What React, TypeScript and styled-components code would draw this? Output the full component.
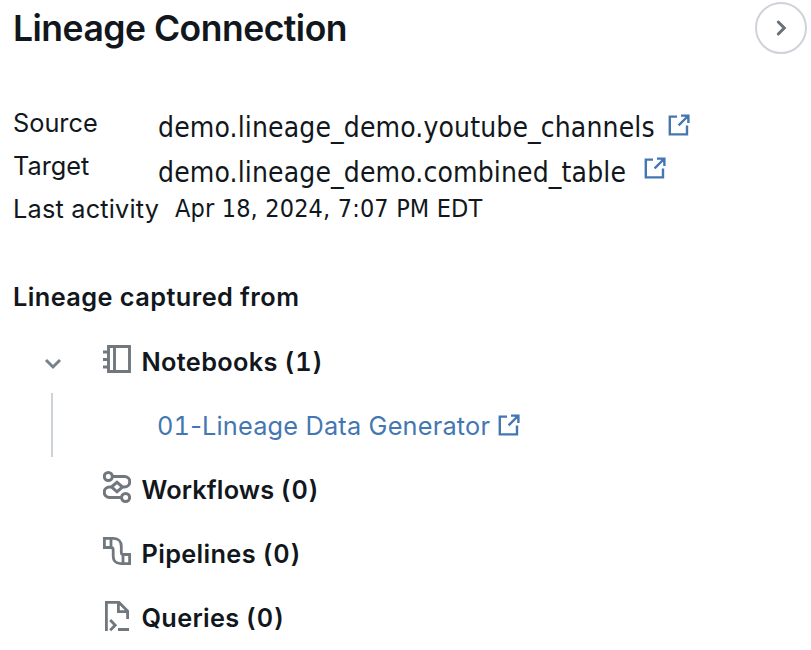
import React from "react";
import styled, { createGlobalStyle } from "styled-components";

const GlobalStyle = createGlobalStyle`
  *, *::before, *::after { box-sizing: border-box; }
  html, body { margin: 0; background: #fff; }
  body { overflow: hidden; font-family: Inter, "Liberation Sans", sans-serif; color: #11171c; }
`;

const Panel = styled.main`
  width: 811px;
  height: 650px;
  display: flex;
  flex-direction: column;
  overflow: hidden;
`;

const Header = styled.header`
  height: 55px;
  display: flex;
  justify-content: space-between;
  padding: 2px 4px 0 13px;
`;

const Title = styled.h1`
  margin: 0;
  font-size: 35.5px;
  font-weight: 600;
  line-height: 54px;
  letter-spacing: -0.5px;
  white-space: nowrap;
`;

const CloseButton = styled.button`
  width: 52px;
  height: 52px;
  padding: 0;
  display: grid;
  place-items: center;
  border: 2px solid #cfd2da;
  border-radius: 50%;
  background: #fff;
  color: #697278;
`;

const Details = styled.dl`
  margin: 46px 0 0;
  padding-left: 13px;
`;

const DetailRow = styled.div`
  height: 43px;
  display: flex;
  align-items: flex-start;
`;

const Label = styled.dt<{ $width: number; $spacing?: number }>`
  width: ${(p) => p.$width}px;
  flex: none;
  font-size: 25.3px;
  line-height: 43px;
  letter-spacing: ${(p) => p.$spacing ?? 0}px;
  white-space: nowrap;
`;

const Value = styled.dd<{ $size: number; $drop: number; $spacing: number }>`
  margin: 0;
  padding-top: ${(p) => p.$drop}px;
  font-family: "DejaVu Sans Condensed", "DejaVu Sans", sans-serif;
  font-stretch: condensed;
  font-size: ${(p) => p.$size}px;
  line-height: 43px;
  letter-spacing: ${(p) => p.$spacing}px;
  white-space: nowrap;
`;

const IconLink = styled.a<{ $gap: number; $top: number }>`
  display: flex;
  margin: ${(p) => p.$top}px 0 0 ${(p) => p.$gap}px;
  color: #4477b2;
`;

const SectionTitle = styled.h2`
  margin: 45px 0 0;
  padding-left: 13px;
  height: 55px;
  font-size: 25.3px;
  font-weight: 600;
  line-height: 43px;
  letter-spacing: 0.44px;
  white-space: nowrap;
`;

const TreeRow = styled.div`
  height: 64px;
  flex: none;
  display: flex;
  align-items: center;
`;

const Toggle = styled.span`
  width: 103px;
  padding: 4px 0 0 44px;
  display: flex;
  color: #77838c;
`;

const KindIcon = styled.span`
  width: 38.5px;
  height: 38px;
  display: flex;
  color: #70787e;
`;

const KindName = styled.span<{ $spacing: number }>`
  font-size: 25.3px;
  font-weight: 600;
  line-height: 64px;
  letter-spacing: ${(p) => p.$spacing}px;
  white-space: pre;
`;

const Count = styled.span`
  letter-spacing: 0.8px;
  font-variant-numeric: tabular-nums;
`;

const Branch = styled.div`
  height: 64px;
  flex: none;
  display: flex;
  margin: -1px 0 1px 51px;
  border-left: 2px solid #cdd2d6;
  padding: 1px 0 0 104px;
`;

const NotebookLink = styled.a`
  width: 332.3px;
  flex: none;
  color: #4477b2;
  font-size: 25.3px;
  line-height: 64px;
  letter-spacing: 0.19px;
  white-space: nowrap;
`;

const NotebookNumber = styled.span`
  font-variant-numeric: tabular-nums;
`;

const ExternalIcon = () => (
  <svg width="22" height="22" viewBox="0 0 22 22" fill="none" stroke="currentColor" strokeWidth="2.4">
    <path d="M9 2.6H1.8V20.4H19V11.5M13 1.6H20.4V9M20 2L10.6 11.4" />
    <path d="M15.5 1H21V6.5Z" fill="currentColor" stroke="none" />
  </svg>
);

const NotebookIcon = () => (
  <svg width="28" height="34" viewBox="0 0 28 34" fill="none" stroke="currentColor" strokeWidth="2.9">
    <path d="M5.5 3.5H26.5V28.5H5.5ZM11.5 3.5V28.5M0 9H5M0 16.5H5M0 24H5" />
  </svg>
);

const WorkflowIcon = () => (
  <svg width="28" height="34" viewBox="0 0 28 34" fill="none" stroke="currentColor" strokeWidth="3">
    <circle cx="5.3" cy="5.5" r="4" />
    <circle cx="22.6" cy="26.5" r="4" />
    <path d="M9.3 5.5H21.5A5.2 5.2 0 0 1 21.5 16H19.5M18.6 26.5H6.5A5.2 5.2 0 0 1 6.5 16H8.5M8.5 16L14 11.2L19.5 16L14 20.8Z" />
  </svg>
);

const PipelineIcon = () => (
  <svg width="28" height="34" viewBox="0 0 28 34" fill="none" stroke="currentColor" strokeWidth="2.8">
    <path d="M1.4 3.4H8V12.5H1.4ZM20 19.5H26.6V28.6H20ZM8 3.4H10.5C15.5 3.4 18.3 6.8 18.3 11.2V17C18.3 18.8 18.8 19.5 20 19.5M20 28.6H17.7C12.5 28.6 10.2 25.2 10.2 21V15C10.2 13.3 9.6 12.5 8 12.5" />
  </svg>
);

const QueryIcon = () => (
  <svg width="28" height="34" viewBox="0 0 28 34" fill="none" stroke="currentColor" strokeWidth="2.8">
    <path d="M3.4 32V3.4H16L24.6 12V20M15.4 3.4V12.6H24.6M7.2 21L12.2 26.2L7.2 31.2M15 30.5H26" />
  </svg>
);

const CloseChevron = () => (
  <svg width="18" height="18" viewBox="0 0 18 18" fill="none" stroke="currentColor" strokeWidth="3" strokeLinecap="round">
    <path d="M6.3 3L12.3 9L6.3 15" />
  </svg>
);

const ToggleChevron = () => (
  <svg width="18" height="18" viewBox="0 0 18 18" fill="none" stroke="currentColor" strokeWidth="3">
    <path d="M2 5L9 12L16 5" />
  </svg>
);

const emptyKinds = [
  { name: "Workflows", icon: <WorkflowIcon />, spacing: 0.15 },
  { name: "Pipelines", icon: <PipelineIcon />, spacing: 0.35 },
  { name: "Queries", icon: <QueryIcon />, spacing: 0.3 },
];

export default function App() {
  return (
    <>
      <GlobalStyle />
      <Panel>
        <Header>
          <Title>Lineage Connection</Title>
          <CloseButton aria-label="Collapse"><CloseChevron /></CloseButton>
        </Header>
        <Details>
          <DetailRow>
            <Label $width={145}>Source</Label>
            <Value $size={28} $drop={5} $spacing={0.14}>demo.lineage_demo.youtube_channels</Value>
            <IconLink $gap={13.2} $top={13}><ExternalIcon /></IconLink>
          </DetailRow>
          <DetailRow>
            <Label $width={145}>Target</Label>
            <Value $size={28} $drop={7} $spacing={0.14}>demo.lineage_demo.combined_table</Value>
            <IconLink $gap={18} $top={13}><ExternalIcon /></IconLink>
          </DetailRow>
          <DetailRow>
            <Label $width={162} $spacing={0.2}>Last activity</Label>
            <Value $size={25} $drop={0} $spacing={0.16}>Apr 18, 2024, 7:07 PM EDT</Value>
          </DetailRow>
        </Details>
        <SectionTitle>Lineage captured from</SectionTitle>
        <TreeRow>
          <Toggle><ToggleChevron /></Toggle>
          <KindIcon><NotebookIcon /></KindIcon>
          <KindName $spacing={0.35}>Notebooks <Count>(1)</Count></KindName>
        </TreeRow>
        <Branch>
          <NotebookLink><NotebookNumber>01</NotebookNumber>-Lineage Data Generator</NotebookLink>
          <IconLink $gap={8.7} $top={20}><ExternalIcon /></IconLink>
        </Branch>
        {emptyKinds.map((kind) => (
          <TreeRow key={kind.name}>
            <Toggle />
            <KindIcon>{kind.icon}</KindIcon>
            <KindName $spacing={kind.spacing}>{kind.name} <Count>(0)</Count></KindName>
          </TreeRow>
        ))}
      </Panel>
    </>
  );
}
